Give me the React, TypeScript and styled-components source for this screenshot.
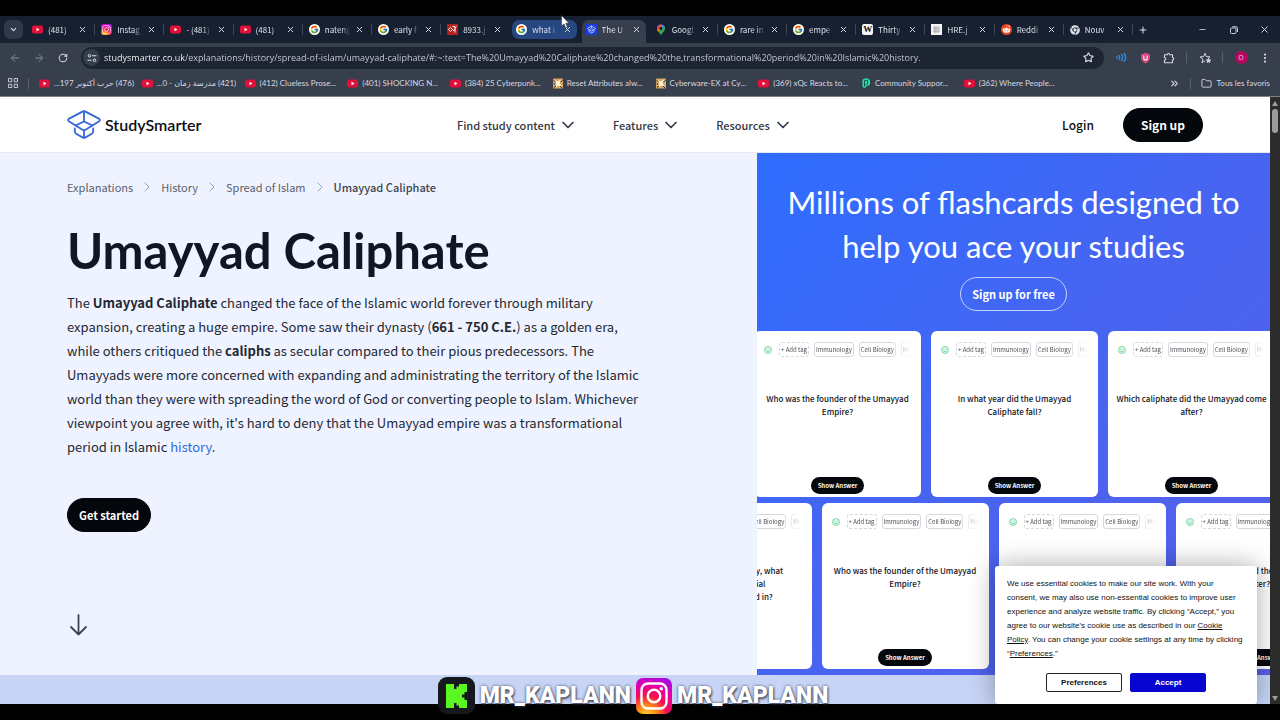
import React from "react";
import styled, { createGlobalStyle, css } from "styled-components";
import {
  ArrowLeft,
  ArrowRight,
  ChevronDown,
  ChevronRight,
  ChevronsRight,
  EllipsisVertical,
  Folder,
  Minus,
  Plus,
  RotateCw,
  Star,
  X,
} from "lucide-react";
import { FaChrome, FaRedditAlien } from "react-icons/fa";
import { FcGoogle } from "react-icons/fc";

const ui = `"Open Sans", "Noto Sans", "DejaVu Sans", sans-serif`;
const source = `"Noto Sans CJK SC", "Noto Sans", "DejaVu Sans", sans-serif`;
const display = `Lato, "Open Sans", sans-serif`;

const GlobalStyle = createGlobalStyle`
  *, *::before, *::after { box-sizing: border-box; }
  body { margin: 0; background: #000; overflow: hidden; }
  button, input { font: inherit; color: inherit; border: 0; margin: 0; padding: 0; background: none; }
  a { color: inherit; text-decoration: none; }
  h1, h2, p { margin: 0; }
  svg { display: block; flex: none; }
`;

const Screen = styled.div`
  position: relative;
  display: flex;
  flex-direction: column;
  height: 100vh;
  padding: 16px 0;
  background: #000;
  overflow: hidden;
`;

/* ---------- browser chrome ---------- */

const TabStrip = styled.div`
  display: flex;
  flex: none;
  height: 27px;
  padding-top: 4px;
  background: #172030;
  color: #dde1e8;
  font: 8px/19px ${source};
`;

const TabSearch = styled.button`
  display: flex;
  flex: none;
  align-items: center;
  justify-content: center;
  width: 19px;
  height: 19px;
  margin: 0 2px 0 4px;
  border-radius: 6px;
  background: #303949;
`;

const Tabs = styled.div`
  display: flex;
  flex: 1;
  min-width: 0;
`;

const Tab = styled.div<{ $state?: "active" | "hover"; $line: boolean }>`
  position: relative;
  display: flex;
  flex: 1 1 0;
  align-items: center;
  min-width: 0;
  height: 19px;
  margin: 0 2px 0 3px;
  padding: 0 5px 0 4px;
  gap: 5px;
  border-radius: 7px;
  ${(p) => p.$state === "hover" && css`background: #26477f;`}
  ${(p) =>
    p.$state === "active" &&
    css`
      height: 23px;
      padding-bottom: 4px;
      border-radius: 7px 7px 0 0;
      background: #373e4c;
    `}
  ${(p) =>
    p.$line &&
    css`
      &::after {
        content: "";
        position: absolute;
        right: -3px;
        top: 4px;
        width: 1px;
        height: 11px;
        background: #3d4656;
      }
    `}
`;

const TabTitle = styled.span`
  flex: 1;
  min-width: 0;
  overflow: hidden;
  white-space: nowrap;
  mask-image: linear-gradient(to right, #000 65%, transparent);
`;

const TabClose = styled.button`
  display: flex;
  flex: none;
`;

const NewTab = styled.button`
  display: flex;
  align-items: center;
  justify-content: center;
  width: 22px;
  height: 19px;
`;

const WindowButtons = styled.div`
  display: flex;
  margin-left: 33px;
`;

const WindowButton = styled.button`
  display: flex;
  align-items: center;
  justify-content: center;
  width: 31px;
  height: 19px;
`;

const Toolbar = styled.div`
  display: flex;
  flex: none;
  align-items: center;
  height: 29px;
  padding: 0 3px;
  background: #373e4c;
  color: #d3d7df;
`;

const ToolButton = styled.button<{ $dim?: boolean }>`
  display: flex;
  flex: none;
  align-items: center;
  justify-content: center;
  width: 24px;
  height: 24px;
  color: ${(p) => (p.$dim ? "#838a97" : "#d3d7df")};
`;

const ToolLine = styled.span`
  flex: none;
  width: 1px;
  height: 11px;
  margin: 0 6px 0 5px;
  background: #596170;
`;

const BarLine = styled(ToolLine)`
  margin: 0 8px 0 10px;
`;

const Address = styled.label`
  display: flex;
  flex: 1;
  align-items: center;
  min-width: 0;
  height: 22px;
  margin: 0 5px 0 6px;
  padding: 0 10px 0 2px;
  gap: 4px;
  border-radius: 11px;
  background: #1d2533;
`;

const SiteInfo = styled.span`
  display: flex;
  align-items: center;
  justify-content: center;
  width: 17px;
  height: 17px;
  border-radius: 50%;
  background: #343d4c;
`;

const AddressInput = styled.input`
  flex: 1;
  min-width: 0;
  font: 400 9px/16px ${ui};
  outline: 0;
  background: linear-gradient(to right, #fff 80px, #ced3db 80px);
  background-clip: text;
  color: transparent;
`;

const Avatar = styled.span`
  width: 13px;
  height: 13px;
  border-radius: 50%;
  background: #b5085c;
  color: #f5d5e4;
  font: 7px/13px ${ui};
  text-align: center;
`;

const BookmarkBar = styled.nav`
  display: flex;
  flex: none;
  align-items: center;
  height: 25px;
  padding: 0 10px 2px 8px;
  border-bottom: 1px solid #7d818c;
  background: #373e4c;
  color: #d6dae2;
  font: 8px/16px Lato, "DejaVu Sans", sans-serif;
`;

const Bookmarks = styled.div`
  display: grid;
  grid-template-columns: repeat(10, minmax(0, 1fr));
  flex: 1;
  margin: 0 102px 0 2px;
`;

const Bookmark = styled.a`
  display: flex;
  align-items: center;
  gap: 4px;
  min-width: 0;
  white-space: nowrap;
`;

const AllBookmarks = styled.a`
  display: flex;
  align-items: center;
  gap: 5px;
  margin-left: 2px;
  white-space: nowrap;
`;

/* ---------- page ---------- */

const Viewport = styled.div`
  display: flex;
  flex: 1;
  min-height: 0;
`;

const Page = styled.div`
  position: relative;
  flex: 1;
  min-width: 0;
  overflow: hidden;
  background: #c7d4f6;
  font-family: ${source};
`;

const ScrollTrack = styled.div`
  display: flex;
  flex-direction: column;
  align-items: center;
  width: 10px;
  padding: 4px 0 3px;
  background: #2c2c2c;
`;

const ScrollThumb = styled.div`
  width: 6px;
  height: 24px;
  margin: 3px 0 auto;
  border-radius: 3px;
  background: #9d9d9d;
`;

const Header = styled.header`
  display: flex;
  align-items: center;
  justify-content: space-between;
  height: 56px;
  padding: 0 67px;
  border-bottom: 1px solid #e6e9f0;
  background: #fff;
`;

const Brand = styled.a`
  display: flex;
  align-items: center;
  gap: 4px;
  color: #0c0d12;
  font: 600 16px/24px ${display};
`;

const Menu = styled.nav`
  display: flex;
  gap: 35px;
  padding-right: 14px;
`;

const MenuButton = styled.button`
  display: flex;
  align-items: center;
  gap: 3px;
  color: #33373f;
  font: 500 11px/20px ${source};
`;

const Account = styled.div`
  display: flex;
  align-items: center;
  gap: 29px;
  color: #0c0d12;
  font: 500 12px/20px ${source};
`;

const Pill = styled.button<{ $outline?: boolean; $wide?: boolean }>`
  height: 34px;
  padding: 0 ${(p) => (p.$wide ? 17 : 11)}px;
  border: 1px solid ${(p) => (p.$outline ? "#c3d2ff" : "#04070c")};
  border-radius: 17px;
  background: ${(p) => (p.$outline ? "transparent" : "#04070c")};
  color: #fff;
  font: 700 ${(p) => (p.$wide ? 12 : 11)}px/20px ${source};
  white-space: nowrap;
`;

const Hero = styled.main`
  display: grid;
  grid-template-columns: minmax(0, 757fr) minmax(0, 513fr);
`;

const Intro = styled.section`
  display: flex;
  flex-direction: column;
  align-items: flex-start;
  padding: 24px 67px 37px;
  background: #eff3ff;
`;

const Crumbs = styled.nav`
  display: flex;
  align-items: center;
  gap: 6px;
  color: #5b616d;
  font: 11px/20px ${source};

  svg { color: #9aa0ab; }
`;

const CurrentCrumb = styled.span`
  color: #3d434f;
  font-weight: 500;
`;

const Title = styled.h1`
  margin-top: 21px;
  color: #111623;
  font: 700 49px/64px ${display};
  white-space: nowrap;
`;

const Lead = styled.p`
  margin: 9px 0 39px;
  color: #232833;
  font: 13px/24px ${source};
  white-space: nowrap;

  a { color: #2e6bd8; }
`;

const ScrollDown = styled.a`
  margin-top: 80px;
  color: #3e4350;
`;

const Promo = styled.section`
  display: flex;
  flex-direction: column;
  align-items: center;
  gap: 6px;
  padding: 27px 0 6px;
  overflow: hidden;
  background: linear-gradient(135deg, #2e6dff, #4565f2 45%, #5960ea);
`;

const PromoTitle = styled.h2`
  color: #fff;
  font: 400 31px/44px ${display};
  text-align: center;
  white-space: nowrap;
`;

const PromoAction = styled.div`
  padding: 3px 0 14px;
`;

const CardRow = styled.div<{ $shifted?: boolean }>`
  display: flex;
  justify-content: center;
  gap: 10px;
  width: 100%;
  padding: ${(p) => (p.$shifted ? "0 40px 0 0" : "0 0 0 2px")};
`;

const Card = styled.article`
  display: flex;
  flex: none;
  flex-direction: column;
  align-items: center;
  width: 167px;
  height: 166px;
  padding: 11px 10px 3px;
  border-radius: 6px;
  background: #fff;
`;

const Tags = styled.div`
  display: flex;
  align-items: center;
  gap: 5px;
  width: 100%;
  overflow: hidden;
  mask-image: linear-gradient(to right, #000 86%, transparent 100%);

  svg { margin-right: 2px; }
`;

const Tag = styled.span<{ $dashed?: boolean }>`
  flex: none;
  height: 15px;
  padding: 0 1px;
  border: 1px ${(p) => (p.$dashed ? "dashed" : "solid")} #d5d8dd;
  border-radius: 3px;
  color: #4c4f56;
  font: 6px/13px ${source};
`;

const Question = styled.p`
  margin-top: 35px;
  color: #10141e;
  font: 500 8px/13px ${source};
  text-align: center;
  white-space: pre;
`;

const Answer = styled.button`
  height: 17px;
  margin-top: auto;
  padding: 0 7px;
  border-radius: 9px;
  background: #04070c;
  color: #fff;
  font: 700 6px/17px ${source};
  white-space: nowrap;
`;

const Cookies = styled.aside`
  position: absolute;
  right: 13px;
  bottom: 0;
  width: 262px;
  padding: 11px 12px 12px;
  border-radius: 3px;
  background: #fff;
  box-shadow: 0 0 26px rgba(0, 0, 0, 0.35);
  color: #111;
  font: 8px/14px "Liberation Sans", Arial, sans-serif;

  a { text-decoration: underline; }
`;

const CookieText = styled.p`
  white-space: nowrap;
`;

const CookieActions = styled.div`
  display: flex;
  justify-content: center;
  gap: 8px;
  margin-top: 12px;
`;

const CookieButton = styled.button<{ $primary?: boolean }>`
  width: 76px;
  height: 19px;
  border: 1px solid ${(p) => (p.$primary ? "#0606d0" : "#222")};
  border-radius: 2px;
  background: ${(p) => (p.$primary ? "#0606d0" : "#fff")};
  color: ${(p) => (p.$primary ? "#fff" : "#111")};
  font-weight: 700;
`;

/* ---------- stream overlay ---------- */

const Handles = styled.div`
  position: absolute;
  left: 0;
  right: 14px;
  bottom: 6px;
  display: flex;
  align-items: center;
  justify-content: center;
  gap: 5px;
`;

const Handle = styled.span`
  color: #fff;
  font: 900 23px/36px Roboto, sans-serif;
  text-shadow: 0 0 3px rgba(30, 35, 60, 0.8), 1px 2px 2px rgba(30, 35, 60, 0.6);
`;

const Pointer = styled.svg`
  position: absolute;
  left: 561px;
  top: 15px;
`;

/* ---------- icons ---------- */

const YouTube = () => (
  <svg width="11" height="11" viewBox="0 0 22 22">
    <rect y="3" width="22" height="16" rx="4" fill="#e0103a" />
    <path d="M9 7.500v7l6-3.500z" fill="#fff" />
  </svg>
);

const Instagram = ({ size = 11, id }: { size?: number; id: string }) => (
  <svg width={size} height={size} viewBox="0 0 36 36">
    <defs>
      <radialGradient id={id} cx="0.3" cy="1.05" r="1.15">
        <stop offset="0" stopColor="#ffd23c" />
        <stop offset="0.25" stopColor="#ff8a12" />
        <stop offset="0.5" stopColor="#f4104f" />
        <stop offset="0.75" stopColor="#e400a8" />
        <stop offset="1" stopColor="#a40be8" />
      </radialGradient>
    </defs>
    <rect width="36" height="36" rx="7" fill={`url(#${id})`} />
    <g fill="none" stroke="#fff" strokeWidth="2.4">
      <rect x="5.500" y="5.500" width="25" height="25" rx="6.500" />
      <circle cx="18" cy="18" r="6.300" />
    </g>
    <circle cx="25.300" cy="10.800" r="1.700" fill="#fff" />
  </svg>
);

const Google = () => (
  <svg width="11" height="11" viewBox="0 0 22 22">
    <circle cx="11" cy="11" r="11" fill="#fff" />
    <FcGoogle x="2" y="2" width="18" height="18" size="18" />
  </svg>
);

const RedSquare = () => (
  <svg width="11" height="11" viewBox="0 0 22 22">
    <rect width="22" height="22" rx="1" fill="#b3201c" />
    <path d="M3 11l4-4 4 4-4 4zM11 5h5v12M16 8l3-3M12 14l4-4" fill="none" stroke="#fff" strokeWidth="2" />
  </svg>
);

const CapLogo = ({ width, height, color }: { width: number; height: number; color: string }) => (
  <svg width={width} height={height} viewBox="0 0 34 29" fill="none" stroke={color} strokeWidth="1.800" strokeLinejoin="round" strokeLinecap="round">
    <path d="M15.500 1.600Q17 .9 18.500 1.600L31.800 8.600Q34 10 31.800 11.600L18.500 19.800Q17 20.700 15.500 19.800L2.200 11.600Q0 10 2.200 8.600Z" />
    <path d="M17 1.500v10M8.500 15.500L17 11.500l8.500 4" />
    <path d="M7.800 18.500v3Q7.800 23 9.500 24l6 3.400q1.500.8 3 0l6-3.400q1.700-1 1.700-2.500v-3M17 20.500v7" />
  </svg>
);

const StudyFavicon = () => (
  <svg width="11" height="11" viewBox="0 0 34 34">
    <rect width="34" height="34" rx="4" fill="#1b3fe0" />
    <g fill="none" stroke="#fff" strokeWidth="2">
      <path d="M17 6L29 14 17 22 5 14zM17 6v6M11 18l6-5 6 5M9 19v4l8 5 8-5v-4" />
    </g>
  </svg>
);

const MapPin = () => (
  <svg width="12" height="12" viewBox="0 0 24 24">
    <path d="M12 1a8 8 0 0 0-8 8h16a8 8 0 0 0-8-8z" fill="#4285f4" />
    <path d="M12 1a8 8 0 0 0-6.100 2.800L12 9z" fill="#ea4335" />
    <path d="M4 9c0 3 1.300 5 3 7l9-11z" fill="#fbbc04" />
    <path d="M4 9a8 8 0 0 1 1.900-5.200L12 9l-6 5a9 9 0 0 1-2-5z" fill="#ea4335" />
    <path d="M20 9c0 6-6 8-8 14-1-3-3-5-5-7L18.500 4.300A8 8 0 0 1 20 9z" fill="#34a853" />
    <circle cx="12" cy="9" r="2.800" fill="#172030" />
  </svg>
);

const WikiMark = styled.span`
  flex: none;
  width: 11px;
  height: 11px;
  border-radius: 2px;
  background: #f4f4f4;
  color: #111;
  font: 700 9px/11px "Liberation Serif", serif;
  text-align: center;
`;

const PictureMark = () => (
  <svg width="11" height="11" viewBox="0 0 22 22">
    <rect width="22" height="22" fill="#f3f3f3" />
    <path d="M6 6h10v10H6zM6 9h7M8 12h6M8 14h4" fill="none" stroke="#777" strokeWidth="1.200" />
  </svg>
);

const RedditMark = () => (
  <svg width="11" height="11" viewBox="0 0 22 22">
    <circle cx="11" cy="11" r="11" fill="#f0471c" />
    <FaRedditAlien x="2.500" y="2" width="17" height="17" size="17" color="#fff" />
  </svg>
);

const Nexus = () => (
  <svg width="10" height="11" viewBox="0 0 20 22">
    <rect y="1" width="20" height="20" rx="2" fill="#d9a766" />
    <path d="M3 4l6 3 7-4-3 7 5 8-7-3-7 4 3-7z" fill="#fff4dc" />
    <path d="M1 5l4 3M19 5l-4 3M2 19l4-3M18 20l-4-4M1 12h3" stroke="#3b2a1c" strokeWidth="2" />
  </svg>
);

const Community = () => (
  <svg width="10" height="12" viewBox="0 0 20 24" fill="none">
    <path d="M3 5l8-3 7 4v9l-7 4H9v4l-6-3z" fill="#27e0ab" />
    <path d="M7 7v12M7 8l6-2v8l-4 2" stroke="#0b4a42" strokeWidth="1.800" />
  </svg>
);

const Tune = () => (
  <svg width="10" height="10" viewBox="0 0 20 20" fill="none" stroke="#dfe3ea" strokeWidth="2">
    <circle cx="5" cy="5.500" r="2.500" />
    <path d="M10 5.500h9M1 14.500h8" />
    <circle cx="15" cy="14.500" r="2.500" />
  </svg>
);

const RestoreIcon = () => (
  <svg width="8" height="8" viewBox="0 0 16 16" fill="none" stroke="currentColor" strokeWidth="1.800">
    <rect x="1" y="4" width="11" height="11" rx="2" />
    <path d="M4.500 1.500H12a3 3 0 0 1 3 3V12" />
  </svg>
);

const Waves = () => (
  <svg width="11" height="9" viewBox="0 0 22 18" fill="none" stroke="#2b8ee8" strokeWidth="2.600" strokeLinecap="round">
    <path d="M2 7v4M6 5q3 4 0 8M11 3q5 6 0 12M16 1q7 8 0 16" />
  </svg>
);

const Shield = () => (
  <svg width="11" height="12" viewBox="0 0 22 24">
    <path d="M11 1Q6 4 2 4v8q1 7 9 11 8-4 9-11V4q-4 0-9-3z" fill="#d6457c" />
    <path d="M7.500 7v5.500a3.500 3.500 0 0 0 7 0V7" fill="none" stroke="#fbe3ec" strokeWidth="2.600" />
  </svg>
);

const Extension = () => (
  <svg width="12" height="12" viewBox="0 0 24 24" fill="none" stroke="currentColor" strokeWidth="2.200" strokeLinejoin="round">
    <path d="M3 5.500h5.500a2.500 2.500 0 0 1 5 0H19V11a2.500 2.500 0 0 1 0 5v5.500H3V16a2.500 2.500 0 0 0 0-5z" />
  </svg>
);

const FavouriteStar = () => (
  <svg width="13" height="12" viewBox="0 0 26 24" fill="none" stroke="#d3d7df" strokeWidth="2" strokeLinejoin="round">
    <path d="M12 17.500L6 21.500l1.700-7L2 9.800l7.200-.6L12 2.500l2.800 6.700 7.200.6-3.500 3" />
    <path d="M19 12l1.500 3.300 3.500.4-2.600 2.400.7 3.400-3.100-1.700-3.100 1.700.7-3.400-2.600-2.400 3.500-.4z" fill="#d3d7df" strokeWidth="1" />
  </svg>
);

const Apps = () => (
  <svg width="10" height="10" viewBox="0 0 20 20" fill="none" stroke="#d3d7df" strokeWidth="1.800">
    <path d="M1 1h6.500v6.500H1zM12.500 1H19v6.500h-6.500zM1 12.500h6.500V19H1zM12.500 12.500H19V19h-6.500z" />
  </svg>
);

const Smiley = () => (
  <svg width="8" height="8" viewBox="0 0 16 16" fill="#e2f9ec" stroke="#4fc68a" strokeWidth="1.400">
    <circle cx="8" cy="8" r="7" />
    <path d="M4.500 9.500q3.500 4 7 0M5.500 5.500v1.500M10.500 5.500v1.500" fill="none" />
  </svg>
);

const Kick = () => (
  <svg width="37" height="37" viewBox="0 0 37 37">
    <rect width="37" height="37" rx="9" fill="#15191e" />
    <path d="M8 7h8v5h2.500V9.500H21V7h8v8h-2.500v2.500H24v3h2.500V23H29v8h-8v-2.500h-2.500V26H16v5H8z" fill="#5bf522" />
  </svg>
);

/* ---------- data ---------- */

type TabData = { title: string; icon: React.ReactNode; state?: "active" | "hover" };

const tabs: TabData[] = [
  { title: "(481)", icon: <YouTube /> },
  { title: "Instag", icon: <Instagram id="ig-tab" /> },
  { title: "- (481)", icon: <YouTube /> },
  { title: "(481)", icon: <YouTube /> },
  { title: "nateng", icon: <Google /> },
  { title: "early f", icon: <Google /> },
  { title: "8933.j", icon: <RedSquare /> },
  { title: "what i", icon: <Google />, state: "hover" },
  { title: "The U", icon: <StudyFavicon />, state: "active" },
  { title: "Googl", icon: <MapPin /> },
  { title: "rare in", icon: <Google /> },
  { title: "empe", icon: <Google /> },
  { title: "Thirty", icon: <WikiMark>W</WikiMark> },
  { title: "HRE.j", icon: <PictureMark /> },
  { title: "Reddi", icon: <RedditMark /> },
  { title: "Nouv", icon: <FaChrome size={10} color="#dfe2e8" /> },
];

const bookmarks: { title: string; icon: React.ReactNode; rtl?: boolean }[] = [
  { title: "(476) حرب أكتوبر 197...", icon: <YouTube />, rtl: true },
  { title: "(421) مدرسة زمان - 0...", icon: <YouTube />, rtl: true },
  { title: "(412) Clueless Prose...", icon: <YouTube /> },
  { title: "(401) SHOCKING N...", icon: <YouTube /> },
  { title: "(384) 25 Cyberpunk...", icon: <YouTube /> },
  { title: "Reset Attributes alw...", icon: <Nexus /> },
  { title: "Cyberware-EX at Cy...", icon: <Nexus /> },
  { title: "(369) xQc Reacts to...", icon: <YouTube /> },
  { title: "Community Suppor...", icon: <Community /> },
  { title: "(362) Where People...", icon: <YouTube /> },
];

const founder = "Who was the founder of the Umayyad\nEmpire?";
const fall = "In what year did the Umayyad\nCaliphate fall?";
const after = "Which caliphate did the Umayyad come\nafter?";
const capital = "Besides the capital city, what\nregion was imperial\npower concentrated in?";

const FlashCard = ({ text }: { text: string }) => (
  <Card>
    <Tags>
      <Smiley />
      <Tag $dashed>+ Add tag</Tag>
      <Tag>Immunology</Tag>
      <Tag>Cell Biology</Tag>
      <Tag>Mo</Tag>
    </Tags>
    <Question>{text}</Question>
    <Answer>Show Answer</Answer>
  </Card>
);

export default function App() {
  return (
    <>
      <GlobalStyle />
      <Screen>
        <TabStrip>
          <TabSearch aria-label="Search tabs">
            <ChevronDown size={9} strokeWidth={3} />
          </TabSearch>
          <Tabs>
            {tabs.map((tab, i) => (
              <Tab key={i} $state={tab.state} $line={i !== 6 && i !== 7 && i !== 8}>
                {tab.icon}
                <TabTitle>{tab.title}</TabTitle>
                <TabClose aria-label="Close tab">
                  <X size={9} strokeWidth={2.5} />
                </TabClose>
              </Tab>
            ))}
          </Tabs>
          <NewTab aria-label="New tab">
            <Plus size={10} strokeWidth={2.5} />
          </NewTab>
          <WindowButtons>
            <WindowButton aria-label="Minimise"><Minus size={9} /></WindowButton>
            <WindowButton aria-label="Restore"><RestoreIcon /></WindowButton>
            <WindowButton aria-label="Close"><X size={11} /></WindowButton>
          </WindowButtons>
        </TabStrip>

        <Toolbar>
          <ToolButton $dim aria-label="Back"><ArrowLeft size={12} /></ToolButton>
          <ToolButton $dim aria-label="Forward"><ArrowRight size={12} /></ToolButton>
          <ToolButton aria-label="Reload"><RotateCw size={10} strokeWidth={2.5} /></ToolButton>
          <Address>
            <SiteInfo><Tune /></SiteInfo>
            <AddressInput
              aria-label="Address"
              readOnly
              value="studysmarter.co.uk/explanations/history/spread-of-islam/umayyad-caliphate/#:~:text=The%20Umayyad%20Caliphate%20changed%20the,transformational%20period%20in%20Islamic%20history."
            />
            <Star size={11} strokeWidth={2.5} />
          </Address>
          <ToolButton aria-label="Read aloud"><Waves /></ToolButton>
          <ToolButton aria-label="Shield"><Shield /></ToolButton>
          <ToolButton aria-label="Extensions"><Extension /></ToolButton>
          <ToolLine />
          <ToolButton aria-label="Favourites"><FavouriteStar /></ToolButton>
          <ToolLine />
          <ToolButton aria-label="Profile"><Avatar>O</Avatar></ToolButton>
          <ToolButton aria-label="Menu"><EllipsisVertical size={12} strokeWidth={2.5} /></ToolButton>
        </Toolbar>

        <BookmarkBar>
          <Apps />
          <BarLine />
          <Bookmarks>
            {bookmarks.map((b) => (
              <Bookmark key={b.title} href="#">
                {b.icon}
                <span dir={b.rtl ? "rtl" : "ltr"}>{b.title}</span>
              </Bookmark>
            ))}
          </Bookmarks>
          <ChevronsRight size={11} strokeWidth={2.5} />
          <BarLine />
          <AllBookmarks href="#">
            <Folder size={11} />
            Tous les favoris
          </AllBookmarks>
        </BookmarkBar>

        <Viewport>
          <Page>
            <Header>
              <Brand href="#">
                <CapLogo width={34} height={29} color="#3467d6" />
                StudySmarter
              </Brand>
              <Menu>
                {["Find study content", "Features", "Resources"].map((item) => (
                  <MenuButton key={item}>
                    {item}
                    <ChevronDown size={20} strokeWidth={2} />
                  </MenuButton>
                ))}
              </Menu>
              <Account>
                <a href="#">Login</a>
                <Pill $wide>Sign up</Pill>
              </Account>
            </Header>

            <Hero>
              <Intro>
                <Crumbs>
                  <a href="#">Explanations</a>
                  <ChevronRight size={16} strokeWidth={1.5} />
                  <a href="#">History</a>
                  <ChevronRight size={16} strokeWidth={1.5} />
                  <a href="#">Spread of Islam</a>
                  <ChevronRight size={16} strokeWidth={1.5} />
                  <CurrentCrumb>Umayyad Caliphate</CurrentCrumb>
                </Crumbs>
                <Title>Umayyad Caliphate</Title>
                <Lead>
                  The <b>Umayyad Caliphate</b> changed the face of the Islamic world forever through military<br />
                  expansion, creating a huge empire. Some saw their dynasty (<b>661 - 750 C.E.</b>) as a golden era,<br />
                  while others critiqued the <b>caliphs</b> as secular compared to their pious predecessors. The<br />
                  Umayyads were more concerned with expanding and administrating the territory of the Islamic<br />
                  world than they were with spreading the word of God or converting people to Islam. Whichever<br />
                  viewpoint you agree with, it's hard to deny that the Umayyad empire was a transformational<br />
                  period in Islamic <a href="#">history</a>.
                </Lead>
                <Pill>Get started</Pill>
                <ScrollDown href="#" aria-label="Scroll down">
                  <svg width="22" height="26" viewBox="0 0 22 26" fill="none" stroke="currentColor" strokeWidth="1.800" strokeLinecap="round" strokeLinejoin="round">
                    <path d="M11.500 3v19.500M4 15l7.500 7.500L19 15" />
                  </svg>
                </ScrollDown>
              </Intro>
              <Promo>
                <PromoTitle>
                  Millions of flashcards designed to<br />help you ace your studies
                </PromoTitle>
                <PromoAction>
                  <Pill $outline>Sign up for free</Pill>
                </PromoAction>
                <CardRow>
                  <FlashCard text={founder} />
                  <FlashCard text={fall} />
                  <FlashCard text={after} />
                </CardRow>
                <CardRow $shifted>
                  <FlashCard text={capital} />
                  <FlashCard text={founder} />
                  <FlashCard text={fall} />
                  <FlashCard text={after} />
                </CardRow>
              </Promo>
            </Hero>

            <Cookies>
              <CookieText>
                We use essential cookies to make our site work. With your<br />
                consent, we may also use non-essential cookies to improve user<br />
                experience and analyze website traffic. By clicking “Accept,” you<br />
                agree to our website's cookie use as described in our <a href="#">Cookie</a><br />
                <a href="#">Policy</a>. You can change your cookie settings at any time by clicking<br />
                “<a href="#">Preferences</a>.”
              </CookieText>
              <CookieActions>
                <CookieButton>Preferences</CookieButton>
                <CookieButton $primary>Accept</CookieButton>
              </CookieActions>
            </Cookies>
          </Page>
          <ScrollTrack>
            <svg width="6" height="5" viewBox="0 0 6 5"><path d="M3 0l3 5H0z" fill="#9d9d9d" /></svg>
            <ScrollThumb />
            <svg width="6" height="5" viewBox="0 0 6 5"><path d="M3 5l3-5H0z" fill="#9d9d9d" /></svg>
          </ScrollTrack>
        </Viewport>

        <Handles>
          <Kick />
          <Handle>MR_KAPLANN</Handle>
          <Instagram size={36} id="ig-handle" />
          <Handle>MR_KAPLANN</Handle>
        </Handles>
        <Pointer width="9" height="14" viewBox="0 0 18 28">
          <path d="M1 1v21l5-4 3.500 8 3.500-1.500-3.500-8H16z" fill="#fff" stroke="#333" strokeWidth="1.200" />
        </Pointer>
      </Screen>
    </>
  );
}
